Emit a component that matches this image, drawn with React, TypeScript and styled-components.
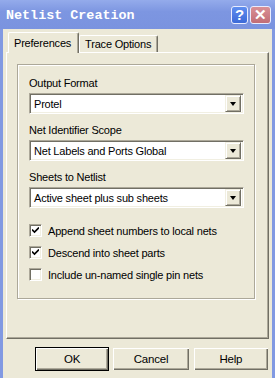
import React, { FC } from 'react';
import styled, { createGlobalStyle } from 'styled-components';

const colors = {
  face: '#ece9d8',
  light: '#f1efe2',
  shadow: '#aca899',
  dark: '#716f64',
  frame: '#8199e2',
};

const GlobalStyle = createGlobalStyle`
  html, body {
    margin:0;
    padding:0;
    background:${colors.face};
  }
  body {
    font-family:"Liberation Sans", Arial, sans-serif;
    font-size:11px;
    letter-spacing:-0.2px;
    color:#000;
  }
`;

const Window = styled.div`
  width:275px;
  height:378px;
  display:flex;
  flex-direction:column;
  overflow:hidden;
`;

const TitleBar = styled.div`
  height:29px;
  flex:none;
  display:flex;
  align-items:center;
  padding:0 4px 0 6px;
  gap:2px;
  background:linear-gradient(to bottom, #94abeb 0%, #7d96e1 40%, #7a93df 100%);
  .title {
    flex:1;
    font-family:"Liberation Mono", "Courier New", monospace;
    font-weight:bold;
    font-size:13.4px;
    color:#fff;
    letter-spacing:0;
    margin-top:1px;
  }
`;

const CaptionButton = styled.div<{ $kind: 'help' | 'close' }>`
  width:${p => (p.$kind === 'help' ? 17 : 21)}px;
  height:18px;
  border-radius:3px;
  border:1px solid #e8ecff;
  box-sizing:border-box;
  display:flex;
  align-items:center;
  justify-content:center;
  background:${p => (p.$kind === 'help'
    ? 'linear-gradient(to bottom, #5f8ef0, #3c6ad8)'
    : 'linear-gradient(to bottom, #d99096, #c26d76)')};
  color:#fff;
  font-family:"Liberation Sans", Arial, sans-serif;
  font-weight:bold;
  font-size:15px;
  letter-spacing:0;
  line-height:1;
`;

const Frame = styled.div`
  flex:1;
  display:flex;
  flex-direction:column;
  border-left:3px solid ${colors.frame};
  border-right:3px solid ${colors.frame};
  padding:0 3px;
  background:${colors.face};
`;

const TabStrip = styled.div`
  height:23px;
  display:flex;
  align-items:flex-end;
  padding-left:2px;
`;

const Tab = styled.div<{ $active?: boolean }>`
  position:relative;
  z-index:${p => (p.$active ? 2 : 1)};
  height:${p => (p.$active ? 21 : 17)}px;
  margin-bottom:${p => (p.$active ? -1 : 0)}px;
  box-sizing:border-box;
  padding:${p => (p.$active ? '3px 7px 0 5px' : '1px 6px 0 5px')};
  background:${colors.face};
  border-top:1px solid #fff;
  border-left:1px solid #fff;
  border-right:1px solid ${colors.dark};
  border-top-left-radius:2px;
  border-top-right-radius:2px;
  box-shadow:inset -1px 0 0 ${colors.shadow};
  line-height:14px;
  white-space:nowrap;
`;

const Panel = styled.div`
  height:287px;
  box-sizing:border-box;
  border-top:1px solid #fff;
  border-left:1px solid #fff;
  border-right:1px solid ${colors.dark};
  border-bottom:1px solid ${colors.dark};
  box-shadow:inset -1px -1px 0 ${colors.shadow};
  padding:11px 13px 0 10px;
`;

const GroupBox = styled.div`
  border:1px solid ${colors.shadow};
  box-shadow:1px 1px 0 #fff, inset 1px 1px 0 #fff;
  padding:12px 10px 17px 11px;
  display:flex;
  flex-direction:column;
`;

const Field = styled.div`
  display:flex;
  flex-direction:column;
  & + & {
    margin-top:10px;
  }
  .label {
    line-height:13px;
    margin-bottom:3px;
  }
`;

const Combo = styled.div`
  height:21px;
  box-sizing:border-box;
  display:flex;
  align-items:center;
  background:#fff;
  border-top:1px solid ${colors.shadow};
  border-left:1px solid ${colors.shadow};
  border-right:1px solid #fff;
  border-bottom:1px solid #fff;
  box-shadow:inset 1px 1px 0 ${colors.dark}, inset -1px -1px 0 ${colors.light};
  padding:2px 2px 2px 4px;
  .value {
    flex:1;
    white-space:nowrap;
  }
`;

const DropButton = styled.div`
  width:16px;
  height:17px;
  box-sizing:border-box;
  background:${colors.face};
  border-top:1px solid ${colors.light};
  border-left:1px solid ${colors.light};
  border-right:1px solid ${colors.dark};
  border-bottom:1px solid ${colors.dark};
  box-shadow:inset 1px 1px 0 #fff, inset -1px -1px 0 ${colors.shadow};
  display:flex;
  align-items:center;
  justify-content:center;
  &:after {
    content:'';
    width:0;
    height:0;
    border-left:3.5px solid transparent;
    border-right:3.5px solid transparent;
    border-top:4px solid #000;
    margin-top:1px;
  }
`;

const Checks = styled.div`
  margin-top:16px;
  display:flex;
  flex-direction:column;
  gap:9px;
`;

const CheckRow = styled.div`
  display:flex;
  align-items:center;
  height:13px;
  gap:6px;
  white-space:nowrap;
`;

const CheckBox = styled.div`
  width:13px;
  height:13px;
  box-sizing:border-box;
  flex:none;
  background:#fff;
  border-top:1px solid ${colors.shadow};
  border-left:1px solid ${colors.shadow};
  border-right:1px solid #fff;
  border-bottom:1px solid #fff;
  box-shadow:inset 1px 1px 0 ${colors.dark}, inset -1px -1px 0 ${colors.light};
  display:flex;
  align-items:center;
  justify-content:center;
`;

const ButtonRow = styled.div`
  margin-top:8px;
  padding-left:29px;
  display:flex;
  gap:3px;
`;

const Button = styled.div<{ $width: number; $default?: boolean }>`
  width:${p => p.$width}px;
  height:24px;
  box-sizing:border-box;
  display:flex;
  align-items:center;
  justify-content:center;
  background:${colors.face};
  border:1px solid ${p => (p.$default ? '#000' : colors.face)};
  box-shadow:inset 1px 1px 0 #fff, inset -1px -1px 0 ${colors.dark}, inset -2px -2px 0 ${colors.shadow};
  font-size:11.5px;
`;

const Check: FC = () => (
  <svg width="7" height="7" viewBox="0 0 7 7">
    <path d="M0 2.5 L2.5 5 L7 0.5" fill="none" stroke="#000" strokeWidth="1.6" />
  </svg>
);

const fields = [
  { label: 'Output Format', value: 'Protel' },
  { label: 'Net Identifier Scope', value: 'Net Labels and Ports Global' },
  { label: 'Sheets to Netlist', value: 'Active sheet plus sub sheets' },
];

const options = [
  { label: 'Append sheet numbers to local nets', checked: true },
  { label: 'Descend into sheet parts', checked: true },
  { label: 'Include un-named single pin nets', checked: false },
];

const App: FC = () => (
  <>
    <GlobalStyle />
    <Window>
      <TitleBar>
        <span className='title'>Netlist Creation</span>
        <CaptionButton $kind='help'>?</CaptionButton>
        <CaptionButton $kind='close'>✕</CaptionButton>
      </TitleBar>
      <Frame>
        <TabStrip>
          <Tab $active>Preferences</Tab>
          <Tab>Trace Options</Tab>
        </TabStrip>
        <Panel>
          <GroupBox>
            {fields.map(field => (
              <Field key={field.label}>
                <span className='label'>{field.label}</span>
                <Combo>
                  <span className='value'>{field.value}</span>
                  <DropButton />
                </Combo>
              </Field>
            ))}
            <Checks>
              {options.map(option => (
                <CheckRow key={option.label}>
                  <CheckBox>{option.checked && <Check />}</CheckBox>
                  {option.label}
                </CheckRow>
              ))}
            </Checks>
          </GroupBox>
        </Panel>
        <ButtonRow>
          <Button $width={75} $default>OK</Button>
          <Button $width={78}>Cancel</Button>
          <Button $width={77}>Help</Button>
        </ButtonRow>
      </Frame>
    </Window>
  </>
);

export default App;
